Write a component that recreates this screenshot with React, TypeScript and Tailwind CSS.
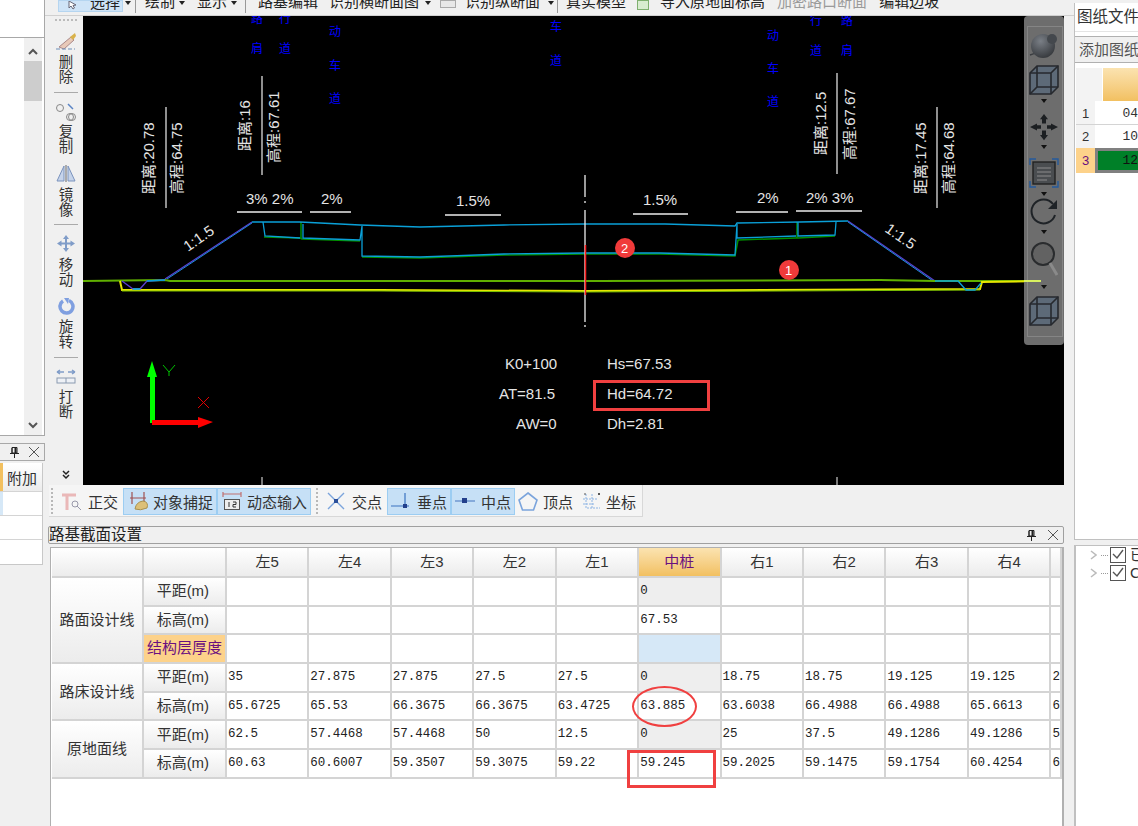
const columns = ["左5", "左4", "左3", "左2", "左1", "中桩", "右1", "右2", "右3", "右4", ""];

const rows = [
  { group: "路面设计线", span: 3, label: "平距(m)", cells: ["", "", "", "", "", "0", "", "", "", "", ""] },
  { label: "标高(m)", cells: ["", "", "", "", "", "67.53", "", "", "", "", ""] },
  { label: "结构层厚度", cells: ["", "", "", "", "", "", "", "", "", "", ""] },
  { group: "路床设计线", span: 2, label: "平距(m)", cells: ["35", "27.875", "27.875", "27.5", "27.5", "0", "18.75", "18.75", "19.125", "19.125", "2"] },
  { label: "标高(m)", cells: ["65.6725", "65.53", "66.3675", "66.3675", "63.4725", "63.885", "63.6038", "66.4988", "66.4988", "65.6613", "6"] },
  { group: "原地面线", span: 2, label: "平距(m)", cells: ["62.5", "57.4468", "57.4468", "50", "12.5", "0", "25", "37.5", "49.1286", "49.1286", "5"] },
  { label: "标高(m)", cells: ["60.63", "60.6007", "59.3507", "59.3075", "59.22", "59.245", "59.2025", "59.1475", "59.1754", "60.4254", "6"] },
];

const Caret = () => <span className="block w-0 h-0 border-x-[3px] border-x-transparent border-t-[4px] border-t-[#222]" />;

const Handle = () => (
  <div className="flex flex-col gap-[2px] w-[2px] h-[26px] justify-center">
    {[0, 1, 2, 3, 4, 5, 6].map((i) => <span key={i} className="w-[2px] h-[2px] bg-[#b8b8b8]" />)}
  </div>
);

const TopBar = () => (
  <div className="h-[16px] border-b border-[#d0d0d0] overflow-hidden flex items-start text-[15px] leading-[15px] text-[#222] whitespace-nowrap">
    <div className="ml-[13px] w-[65px] h-[12px] bg-[#cfe4f7] border border-[#b5d5f0] flex justify-between pl-[9px] pr-[2px] overflow-hidden">
      <svg width="9" height="9" viewBox="0 0 9 9" fill="white" stroke="#667">
        <path d="M1 0 L1 7 L3 5 L5 8 L6.5 7 L5 4.5 L8 4Z" />
      </svg>
      <span className="-mt-[6px]">选择</span>
    </div>
    <span className="ml-[2px] mt-[1px]"><Caret /></span>
    <span className="ml-[4px] w-px h-[13px] bg-[#999]" />
    <span className="ml-[9px] -mt-[6px]">绘制</span>
    <span className="ml-[4px] mt-[1px]"><Caret /></span>
    <span className="ml-[12px] -mt-[6px]">显示</span>
    <span className="ml-[4px] mt-[1px]"><Caret /></span>
    <span className="ml-[8px] w-px h-[13px] bg-[#999]" />
    <span className="ml-[12px] -mt-[6px]">路基编辑</span>
    <span className="ml-[11px] -mt-[6px]">识别横断面图</span>
    <span className="ml-[6px] mt-[1px]"><Caret /></span>
    <span className="ml-[9px] w-[16px] h-[8px] bg-[#e8e8e8] border border-[#aaa]" />
    <span className="ml-[9px] -mt-[6px]">识别纵断面</span>
    <span className="ml-[8px] mt-[1px]"><Caret /></span>
    <span className="ml-[3px] w-px h-[13px] bg-[#999]" />
    <span className="ml-[8px] -mt-[6px]">真实模型</span>
    <span className="ml-[11px] w-[12px] h-[10px] bg-[#d8ecd0] border border-[#7fb070]" />
    <span className="ml-[11px] -mt-[6px]">导入原地面标高</span>
    <span className="ml-[12px] -mt-[6px] text-[#9a9a9a]">加密路口断面</span>
    <span className="ml-[12px] -mt-[6px]">编辑边坡</span>
  </div>
);

const Tool = ({ icon, a, b, cls, textCls }: { icon: React.ReactNode; a: string; b: string; cls: string; textCls: string }) => (
  <>
    <div className={cls}>{icon}</div>
    <div className={textCls}>
      <div>{a}</div>
      <div>{b}</div>
    </div>
  </>
);

const Sep = ({ cls }: { cls: string }) => <div className={cls} />;

const LeftStrip = () => (
  <div className="w-[34px] flex flex-col items-center text-[14.5px] leading-[15px] text-[#333]">
    <div className="mt-[3px] h-[3px] flex gap-[2px]">
      {[0, 1, 2, 3, 4, 5].map((i) => <span key={i} className="w-[2px] h-[2px] bg-[#bbb]" />)}
    </div>
    <Tool
      cls="mt-[10px] h-[18px]"
      textCls="mt-[5px]"
      a="删"
      b="除"
      icon={
        <svg width="22" height="18" viewBox="0 0 22 18">
          <path d="M4 15 L16 5 L19 8 L9 17Z" fill="#e8c9b8" stroke="#a88" />
          <path d="M15 5 L20 1 L21 4 L18 8Z" fill="#d9b24a" />
          <path d="M1 17 H20" stroke="#6f8fb8" strokeDasharray="4 2" />
        </svg>
      }
    />
    <Sep cls="mt-[7px] w-[24px] h-px bg-[#aaa]" />
    <Tool
      cls="mt-[9px] h-[20px]"
      textCls="mt-[3px]"
      a="复"
      b="制"
      icon={
        <svg width="22" height="20" viewBox="0 0 22 20" fill="none">
          <circle cx="5" cy="6" r="3.5" stroke="#888" />
          <circle cx="15" cy="15" r="3.5" stroke="#888" />
          <circle cx="17" cy="15" r="3.5" stroke="#888" />
          <path d="M13 2 L18 7" stroke="#5b84c4" strokeWidth="1.5" />
        </svg>
      }
    />
    <Tool
      cls="mt-[10px] h-[17px]"
      textCls="mt-[6px]"
      a="镜"
      b="像"
      icon={
        <svg width="20" height="17" viewBox="0 0 20 17" fill="#c6d4ea" stroke="#7b93bd">
          <path d="M8 1 V16 H1Z" />
          <path d="M12 1 V16 H19Z" />
          <path d="M10 0 V17" stroke="#666" />
        </svg>
      }
    />
    <Sep cls="mt-[6px] w-[24px] h-px bg-[#aaa]" />
    <Tool
      cls="mt-[10px] h-[17px]"
      textCls="mt-[6px]"
      a="移"
      b="动"
      icon={
        <svg width="18" height="17" viewBox="0 0 18 17" fill="#7f9cc8">
          <path d="M9 0 L12 4 H10 V7.5 H13.5 V5.5 L18 8.5 L13.5 11.5 V9.5 H10 V13 H12 L9 17 L6 13 H8 V9.5 H4.5 V11.5 L0 8.5 L4.5 5.5 V7.5 H8 V4 H6Z" />
        </svg>
      }
    />
    <Tool
      cls="mt-[10px] h-[17px]"
      textCls="mt-[5px]"
      a="旋"
      b="转"
      icon={
        <svg width="17" height="17" viewBox="0 0 17 17" fill="none">
          <path d="M11 2.5 A6.5 6.5 0 1 1 5 3" stroke="#7f9fe0" strokeWidth="3.5" />
          <path d="M6 0 L11 0 L10 6Z" fill="#7f9fe0" />
        </svg>
      }
    />
    <Sep cls="mt-[7px] w-[24px] h-px bg-[#aaa]" />
    <Tool
      cls="mt-[11px] h-[15px]"
      textCls="mt-[6px]"
      a="打"
      b="断"
      icon={
        <svg width="20" height="15" viewBox="0 0 20 15" fill="none">
          <path d="M8 3 H1 M1 3 L4 1 M1 3 L4 5" stroke="#7f9cc8" strokeWidth="1.5" />
          <path d="M12 3 H19 M19 3 L16 1 M19 3 L16 5" stroke="#7f9cc8" strokeWidth="1.5" />
          <rect x="1" y="9" width="18" height="5" fill="#eef1f6" stroke="#8a9ab0" />
          <path d="M10 9 V14" stroke="#8a9ab0" />
        </svg>
      }
    />
    <div className="mt-auto mb-[5px]">
      <svg width="8" height="10" viewBox="0 0 8 10" fill="none" stroke="#222" strokeWidth="1.5">
        <path d="M1 1 L4 4 L7 1 M1 5 L4 8 L7 5" />
      </svg>
    </div>
  </div>
);

const Line = ({ d, c, w = 1.3 }: { d: string; c: string; w?: number }) => <polyline points={d} fill="none" stroke={c} strokeWidth={w} />;

const T = ({ x, y, s, size = 15, fill = "#e4e4e4", rot }: { x: number; y: number; s: string; size?: number; fill?: string; rot?: number }) => (
  <text x={rot === undefined ? x : 0} y={rot === undefined ? y : 0} transform={rot === undefined ? undefined : `translate(${x} ${y}) rotate(${rot})`} fontSize={size} fill={fill}>
    {s}
  </text>
);

const blueLabels: [number, number, string][] = [
  [251, 23, "路"], [251, 53, "肩"], [279, 23, "行"], [279, 53, "道"],
  [329, 36, "动"], [329, 70, "车"], [329, 103, "道"], [550, 31, "车"], [550, 65, "道"],
  [767, 40, "动"], [767, 73, "车"], [767, 106, "道"], [810, 25, "行"], [810, 55, "道"], [841, 25, "路"], [841, 55, "肩"],
];

const Drawing = () => (
  <svg className="w-[981px] h-[469px] block" viewBox="83 16 981 469">
    {blueLabels.map(([x, y, s]) => <T key={`${x}-${y}`} x={x} y={y} s={s} size={12} fill="#0000ff" />)}

    <T x={154} y={194} s="距离:20.78" rot={-90} />
    <T x={182} y={194} s="高程:64.75" rot={-90} />
    <T x={250} y={151} s="距离:16" rot={-90} />
    <T x={279} y={163} s="高程:67.61" rot={-90} />
    <T x={826} y={155} s="距离:12.5" rot={-90} />
    <T x={855} y={160} s="高程:67.67" rot={-90} />
    <T x={926} y={194} s="距离:17.45" rot={-90} />
    <T x={954} y={194} s="高程:64.68" rot={-90} />
    <Line d="166,107 166,208" c="#ddd" />
    <Line d="262,76 262,175" c="#ddd" />
    <Line d="837,73 837,174" c="#ddd" />
    <Line d="937,107 937,208" c="#ddd" />

    <T x={246} y={204} s="3% 2%" />
    <T x={321} y={204} s="2%" />
    <T x={456} y={206} s="1.5%" />
    <T x={643} y={205} s="1.5%" />
    <T x={757} y={203} s="2%" />
    <T x={806} y={203} s="2% 3%" />
    <Line d="237,212 302,212" c="#eee" />
    <Line d="310,212 351,212" c="#eee" />
    <Line d="445,215 501,215" c="#eee" />
    <Line d="633,214 688,214" c="#eee" />
    <Line d="736,212 788,212" c="#eee" />
    <Line d="796,211 862,211" c="#eee" />
    <T x={188} y={252} s="1:1.5" rot={-35} />
    <T x={884} y={231} s="1:1.5" rot={35} />

    <Line d="165,279 252,222" c="#5a3fd0" w={1.2} />
    <Line d="848,221 935,281" c="#5a3fd0" w={1.2} />
    <Line d="167,279 252,223" c="#1e90e0" w={1} />
    <Line d="848,222 933,281" c="#1e90e0" w={1} />

    <Line d="264,237 300,238 302,239 360,241" c="#009000" w={1.5} />
    <Line d="362,257 420,258 504,255 585,254 660,254 735,256 738,240 796,238 798,238 835,236" c="#009000" w={1.5} />
    <Line d="301,222 301,239" c="#009000" w={1.5} />
    <Line d="797,222 797,238" c="#009000" w={1.5} />
    <Line d="252,222 300,222 360,225 420,227 504,225 585,224 665,224 735,226 737,223 800,222 848,221" c="#0aa0d8" />
    <Line d="263,222 265,236 300,238" c="#0aa0d8" />
    <Line d="303,224 303,238 360,240 362,226 362,256 420,257 504,254 585,253 660,253 735,255 737,224 737,238 796,236" c="#0aa0d8" />
    <Line d="798,222 798,236 835,235 836,222" c="#0aa0d8" />

    <Line d="83,281 165,280 170,281 600,281 880,280 935,281 1040,281" c="#60b000" w={2} />
    <Line d="120,281 122,290 380,290 585,291 980,289 982,282 1040,281" c="#e6e600" w={2} />
    <Line d="122,291 380,291 585,292 980,290" c="#7ac000" w={1} />
    <Line d="122,281 133,289 140,289 147,281 165,280" c="#5a3fd0" />
    <Line d="133,289 140,289" c="#0ad0e0" />
    <Line d="147,281 165,280" c="#0aa0d8" />
    <Line d="935,281 958,281 966,290 975,290 981,283" c="#0aa0d8" />

    <Line d="585,175 585,197" c="#eee" />
    <Line d="585,201 585,203" c="#eee" />
    <Line d="585,210 585,322" c="#eee" />
    <Line d="585,325 585,327" c="#eee" />
    <Line d="585.5,245 585.5,295" c="#ff2020" w={1.5} />

    <circle cx={625} cy={248} r={10} fill="#f03a3a" />
    <T x={621} y={253} s="2" size={13} fill="#fff" />
    <circle cx={789} cy={270} r={10} fill="#f03a3a" />
    <T x={785} y={275} s="1" size={13} fill="#fff" />

    <rect x={150} y={372} width={5} height={51} fill="#00ff00" />
    <path d="M152 361 L157 377 H147Z" fill="#00ff00" />
    <rect x={152} y={420} width={48} height={5} fill="#ff0000" />
    <path d="M213 422 L198 417 V428Z" fill="#ff0000" />
    <path d="M163 365 L169 372 L175 365 M169 372 V376" fill="none" stroke="#00c000" />
    <path d="M198 397 L209 408 M209 397 L198 408" fill="none" stroke="#e00000" />

    <T x={505} y={369} s="K0+100" />
    <T x={607} y={369} s="Hs=67.53" />
    <T x={499} y={399} s="AT=81.5" />
    <T x={607} y={399} s="Hd=64.72" />
    <T x={516} y={429} s="AW=0" />
    <T x={607} y={429} s="Dh=2.81" />
    <rect x={594.5} y={381.5} width={114} height={28} fill="none" stroke="#f04040" strokeWidth={3} />

    <Line d="262,477 262,485" c="#bbb" />
    <Line d="837,477 837,485" c="#bbb" />
  </svg>
);

const Cube = () => (
  <svg width="30" height="30" viewBox="0 0 30 30" fill="#5d6a78" stroke="#26292e" strokeWidth="1.6">
    <path d="M1 8 L8 1 H29 V22 L22 29 H1Z" />
    <path d="M1 8 H22 V29 M22 8 L29 1 M1 29 L8 22 H29 M8 1 V22" fill="none" />
  </svg>
);

const Drop = ({ cls }: { cls: string }) => (
  <div className={`relative flex ${cls}`}>
    <span className="w-0 h-0 border-x-[3px] border-x-transparent border-t-[4px] border-t-[#111]" />
  </div>
);

const Gizmo = () => (
  <div className="absolute left-[941px] top-0 w-[40px] h-[329px] bg-[#6d6d6d] rounded-[4px] pt-[15px] flex flex-col items-center">
    <div className="absolute left-[3px] right-[1px] top-[10px] bottom-[8px] border border-[#858585]" />
    <div className="absolute left-0 top-[264px] w-[17px] h-[2px] bg-[#d8f060]" />
    <svg className="relative" width="32" height="28" viewBox="0 0 32 28">
      <defs>
        <radialGradient id="ball" cx="40%" cy="30%" r="75%">
          <stop offset="0%" stopColor="#7a7f86" />
          <stop offset="100%" stopColor="#34373b" />
        </radialGradient>
      </defs>
      <path d="M2 24 Q10 22 27 10" fill="none" stroke="#3a3d41" strokeWidth="1.4" />
      <circle cx="15" cy="15" r="12" fill="url(#ball)" />
      <circle cx="24" cy="8" r="5" fill="#44484d" />
    </svg>
    <div className="relative mt-[6px]"><Cube /></div>
    <Drop cls="mt-[4px]" />
    <svg className="relative mt-[10px]" width="28" height="28" viewBox="0 0 28 32" preserveAspectRatio="none" fill="#1c1f22">
      <path d="M14 1 L18 7 H16 V12 H12 V7 H10Z M14 31 L18 25 H16 V20 H12 V25 H10Z M0 16 L7 12 V14 H11 V18 H7 V20Z M28 16 L21 12 V14 H17 V18 H21 V20Z" />
    </svg>
    <Drop cls="mt-[4px]" />
    <svg className="relative mt-[9px]" width="30" height="30" viewBox="0 0 30 30" fill="none">
      <path d="M1 7 V1 H7 M23 1 H29 V7 M1 23 V29 H7 M23 29 H29 V23" stroke="#245a9c" strokeWidth="1.4" />
      <rect x="4" y="4" width="22" height="22" fill="#4a4d50" stroke="#222" strokeWidth="1.4" />
      <path d="M8 10 H22 M8 14 H22 M8 18 H22 M8 22 H18" stroke="#8c8c8c" />
    </svg>
    <Drop cls="mt-[4px]" />
    <svg className="relative mt-[2px]" width="30" height="28" viewBox="0 0 30 28" fill="none">
      <path d="M24 6 A12 12 0 1 0 26 17" stroke="#1f2327" strokeWidth="2" />
      <path d="M28 2 V11 H19Z" fill="#1f2327" />
    </svg>
    <Drop cls="mt-[4px]" />
    <svg className="relative mt-[7px]" width="28" height="36" viewBox="0 0 28 36" fill="none">
      <circle cx="13" cy="13" r="11" fill="#626262" stroke="#2a2c2e" strokeWidth="2" />
      <path d="M20 22 L27 34" stroke="#8a8a8a" strokeWidth="3" />
    </svg>
    <Drop cls="mt-[8px]" />
    <div className="relative mt-[7px]"><Cube /></div>
  </div>
);

const Snap = ({ label, active, icon, cls }: { label: string; active?: boolean; icon: React.ReactNode; cls: string }) => (
  <div className={`h-[27px] mt-[1px] flex items-center ${cls} ${active ? "bg-[#c6e0f6] border border-[#9ccdf2]" : ""}`}>
    {icon}
    <span className="mt-[4px] leading-[20px]">{label}</span>
  </div>
);

const BottomBar = () => (
  <div className="ml-[4px] w-[594px] h-[32px] bg-[#f5f5f5] border-r border-b border-[#d8d8d8] flex items-center text-[15px] text-[#333] whitespace-nowrap">
    <span className="ml-[2px]"><Handle /></span>
    <Snap
      cls="w-[70px] pl-[9px] gap-[6px]"
      label="正交"
      icon={
        <svg width="20" height="18" viewBox="0 0 20 18" fill="none">
          <path d="M0 3 H14 M5 3 V18" stroke="#eab8b8" strokeWidth="3" />
          <circle cx="13" cy="12" r="3" stroke="#99a" />
          <path d="M15 14 L19 18" stroke="#99a" />
        </svg>
      }
    />
    <Snap
      active
      cls="w-[94px] pl-[6px] gap-[3px]"
      label="对象捕捉"
      icon={
        <svg width="20" height="20" viewBox="0 0 20 20" fill="none">
          <path d="M2 1 V13 M14 1 V13 M0 7 H16" stroke="#a05050" strokeWidth="1.2" />
          <path d="M5 18 Q6 11 13 10 Q19 11 17 17 Q10 20 5 18Z" fill="#dcc078" stroke="#a89050" />
        </svg>
      }
    />
    <Snap
      active
      cls="w-[94px] pl-[4px] gap-[5px]"
      label="动态输入"
      icon={
        <svg width="20" height="20" viewBox="0 0 20 20" fill="none">
          <path d="M1 1 V6 M19 1 V6 M1 3 H19" stroke="#c07070" strokeWidth="1.2" />
          <rect x="2.5" y="8.5" width="15" height="10" fill="#eee" stroke="#555" />
          <path d="M7 11 V16 M11 11 H14 V13.5 H11 V16 H14" stroke="#333" />
        </svg>
      }
    />
    <span className="ml-[5px]"><Handle /></span>
    <Snap
      cls="w-[69px] pl-[9px] gap-[7px]"
      label="交点"
      icon={
        <svg width="18" height="18" viewBox="0 0 18 18" fill="none">
          <path d="M1 1 L17 17 M17 1 L1 17" stroke="#7ba4dc" strokeWidth="1.4" />
          <rect x="7" y="7" width="4" height="4" fill="#2a4f9a" />
        </svg>
      }
    />
    <Snap
      active
      cls="w-[64px] pl-[3px] gap-[6px]"
      label="垂点"
      icon={
        <svg width="20" height="18" viewBox="0 0 20 18" fill="none">
          <path d="M0 14 H18 M14 1 V14" stroke="#3a72c0" strokeWidth="1.2" />
          <rect x="12" y="12" width="4" height="4" fill="#23408c" />
        </svg>
      }
    />
    <Snap
      active
      cls="w-[64px] pl-[3px] gap-[6px]"
      label="中点"
      icon={
        <svg width="20" height="8" viewBox="0 0 20 8" fill="none">
          <path d="M0 4 H20" stroke="#5a86c8" strokeWidth="1.2" />
          <rect x="7" y="1" width="5" height="5" fill="#23408c" />
        </svg>
      }
    />
    <Snap
      cls="w-[63px] pl-[3px] gap-[5px]"
      label="顶点"
      icon={
        <svg width="20" height="19" viewBox="0 0 20 19" fill="none">
          <path d="M10 1 L19 8 L15.5 18 H4.5 L1 8Z" stroke="#7ba4dc" strokeWidth="1.6" />
        </svg>
      }
    />
    <Snap
      cls="w-[62px] pl-[3px] gap-[5px]"
      label="坐标"
      icon={
        <svg width="20" height="20" viewBox="0 0 20 20" fill="none">
          <path d="M5 3 V17 H19 M2 8 H17 M2 13 H14 M11 3 V17" stroke="#8db4e4" strokeDasharray="2 1" />
          <path d="M3 3 H5 M17 2 L19 4 M19 2 L17 4" stroke="#555" />
        </svg>
      }
    />
  </div>
);

const Grid = () => (
  <table className="table-fixed border-collapse text-[15px] text-[#333]">
    <colgroup>
      <col className="w-[91px]" />
      <col className="w-[83px]" />
      {columns.map((c, i) => <col key={i} className={i === 10 ? "w-[10px]" : "w-[82.5px]"} />)}
    </colgroup>
    <thead>
      <tr className="h-[29px]">
        <th className="border-2 border-[#d4d4d4] border-t-0 border-l-0 bg-gradient-to-b from-white to-[#ececec]" />
        <th className="border-2 border-[#d4d4d4] border-t-0 bg-gradient-to-b from-white to-[#ececec]" />
        {columns.map((c, i) => (
          <th
            key={i}
            className={`border-2 border-t-0 font-normal ${c === "中桩" ? "border-[#d4d4d4] bg-gradient-to-b from-[#fbe3b0] to-[#f2c060] text-[#6a1080]" : "border-[#d4d4d4] bg-gradient-to-b from-white to-[#ececec]"}`}
          >
            {c}
          </th>
        ))}
      </tr>
    </thead>
    <tbody>
      {rows.map((r, ri) => (
        <tr key={ri} className="h-[28.7px]">
          {r.group && (
            <td rowSpan={r.span} className="border-2 border-l-0 border-[#d4d4d4] text-center bg-gradient-to-b from-white to-[#ececec]">
              {r.group}
            </td>
          )}
          <td
            className={`border-2 border-[#d4d4d4] text-center whitespace-nowrap ${r.label === "结构层厚度" ? "bg-[#fdd28a] text-[#6a1080]" : "bg-gradient-to-b from-white to-[#ececec] pr-[3px]"}`}
          >
            {r.label}
          </td>
          {r.cells.map((v, i) => {
            const isMid = i === 5;
            const grey = isMid && r.label === "平距(m)";
            const blue = isMid && r.label === "结构层厚度";
            return (
              <td
                key={i}
                className={`border-2 border-[#d4d4d4] pl-[1px] overflow-hidden whitespace-nowrap font-['Liberation_Mono',monospace] text-[12.5px] text-[#222] ${grey ? "bg-[#eeeeee]" : blue ? "bg-[#d6e8f7]" : "bg-white"}`}
              >
                {v}
              </td>
            );
          })}
        </tr>
      ))}
    </tbody>
  </table>
);

const Pin = () => (
  <svg width="9" height="11" viewBox="0 0 9 11" fill="none" stroke="#222">
    <path d="M2 .5 H7 V6 H2Z M2 1 V6 M0 6.5 H9 M4.5 7 V11" />
    <path d="M5.5 1 V6" strokeWidth="2" />
  </svg>
);

const CloseX = () => (
  <svg width="10" height="10" viewBox="0 0 10 10" stroke="#555">
    <path d="M0 0 L10 10 M10 0 L0 10" />
  </svg>
);

const LeftColumn = () => (
  <div className="w-[45px] shrink-0 flex flex-col text-[15px] text-[#333]">
    <div className="h-[38px] bg-white border-b border-r border-[#a8a8a8]" />
    <div className="h-[398px] bg-white border-b border-r border-[#a8a8a8] flex justify-end">
      <div className="w-[18px] mr-[2px] bg-[#f0f0f0] flex flex-col items-center">
        <svg className="mt-[10px]" width="10" height="7" viewBox="0 0 10 7" fill="none" stroke="#555" strokeWidth="2">
          <path d="M1 6 L5 2 L9 6" />
        </svg>
        <div className="mt-[6px] w-[18px] h-[40px] bg-[#cdcdcd]" />
        <svg className="mt-auto mb-[6px]" width="10" height="7" viewBox="0 0 10 7" fill="none" stroke="#555" strokeWidth="2">
          <path d="M1 1 L5 5 L9 1" />
        </svg>
      </div>
    </div>
    <div className="mt-[7px] h-[18px] border border-l-0 border-[#a8a8a8] flex items-center justify-end gap-[10px] pr-[5px]">
      <Pin />
      <CloseX />
    </div>
    <div className="mt-[2px] w-[43px] bg-white border-r border-b border-[#c8c8c8]">
      <div className="h-[29px] flex border-b border-[#d4d4d4] bg-gradient-to-b from-white to-[#ececec]">
        <div className="w-[3px] bg-[#f2c060]" />
        <div className="pl-[4px] leading-[31px]">附加</div>
      </div>
      <div className="h-[24px] flex border-b border-[#d4d4d4]"><div className="w-[3px] bg-[#d6e8f7]" /></div>
      <div className="h-[24px] border-b border-[#d4d4d4]" />
      <div className="h-[24px]" />
    </div>
  </div>
);

const RightColumn = () => (
  <div className="w-[64px] shrink-0 flex flex-col text-[#333] whitespace-nowrap overflow-hidden">
    <div className="mt-[3px] h-[537px] bg-white border-l border-b border-[#c0c0c0]">
      <div className="h-[29px] pl-[2px] text-[15.5px] leading-[27px] border-b border-[#e4e4e4]">图纸文件</div>
      <div className="mt-[4px] h-[27px] bg-[#f0f0f0] border-y border-[#b0b0b0] pl-[4px] text-[15px] leading-[25px] text-[#555]">添加图纸</div>
      <div className="mt-[5px] pl-[1px] text-[13px]">
        <div className="flex h-[33px]">
          <div className="w-[26px] bg-[#f3f3f3]" />
          <div className="flex-1 ml-[1px] bg-gradient-to-b from-[#fbe3b0] to-[#f2c060]" />
        </div>
        <div className="flex h-[24px] border-b border-[#d4d4d4]">
          <div className="w-[26px] bg-[#f3f3f3] text-center leading-[25px]">1</div>
          <div className="flex-1 pl-[27px] leading-[25px] font-['Liberation_Mono',monospace]">04</div>
        </div>
        <div className="flex h-[23px]">
          <div className="w-[26px] bg-[#f3f3f3] text-center leading-[23px]">2</div>
          <div className="flex-1 pl-[27px] leading-[23px] font-['Liberation_Mono',monospace]">10</div>
        </div>
        <div className="flex h-[25px]">
          <div className="w-[26px] bg-[#fdd28a] text-[#6a1080] text-center leading-[25px]">3</div>
          <div className="flex-1 bg-[#008028] border-[3px] border-r-0 border-[#808080] pl-[24px] leading-[19px] font-['Liberation_Mono',monospace] text-[#111]">12</div>
        </div>
      </div>
    </div>
    <div className="mt-[5px] flex-1 bg-white border-l-2 border-t border-[#c0c0c0]">
      {["已", "CA"].map((s) => (
        <div key={s} className="h-[18px] flex items-center text-[15px]">
          <svg className="ml-[14px] shrink-0" width="7" height="10" viewBox="0 0 7 10" fill="none" stroke="#bbb" strokeWidth="1.5">
            <path d="M1 1 L6 5 L1 9" />
          </svg>
          <span className="ml-[4px] w-[7px] shrink-0 border-t border-dotted border-[#999]" />
          <svg className="ml-[2px] shrink-0" width="16" height="16" viewBox="0 0 16 16" fill="white" stroke="#555">
            <rect x=".5" y=".5" width="15" height="15" />
            <path d="M3 7 L7 11 L13 3" fill="none" strokeWidth="1.4" />
          </svg>
          <span className="ml-[4px]">{s}</span>
        </div>
      ))}
    </div>
  </div>
);

export default function App() {
  return (
    <div className="w-[1138px] h-[826px] overflow-hidden flex bg-[#f0f0f0] font-['Liberation_Sans','Noto_Sans_CJK_SC',sans-serif]">
      <LeftColumn />
      <div className="w-[1029px] shrink-0 flex flex-col">
        <TopBar />
        <div className="ml-[4px] h-[469px] flex">
          <LeftStrip />
          <div className="relative w-[981px] bg-black">
            <Drawing />
            <Gizmo />
          </div>
        </div>
        <BottomBar />
        <div className="mt-[9px] ml-[3px] w-[1016px] h-[18px] border border-[#a0a0a0] rounded-[2px] flex items-center justify-between pr-[5px] text-[15.5px] leading-[16px] text-[#222]">
          <span>路基截面设置</span>
          <span className="flex items-center gap-[12px]">
            <Pin />
            <CloseX />
          </span>
        </div>
        <div className="relative mt-[3px] ml-[5px] w-[1014px] flex-1 bg-white border-l border-r-2 border-t border-[#b0b0b0] pl-[1px] overflow-hidden">
          <Grid />
          <div className="absolute left-[581px] top-[138px] w-[65px] h-[41px] border-[2.5px] border-[#f04040] rounded-[50%]" />
          <div className="absolute left-[576px] top-[202px] w-[89px] h-[38px] border-[3px] border-[#f04040]" />
        </div>
      </div>
      <RightColumn />
    </div>
  );
}
